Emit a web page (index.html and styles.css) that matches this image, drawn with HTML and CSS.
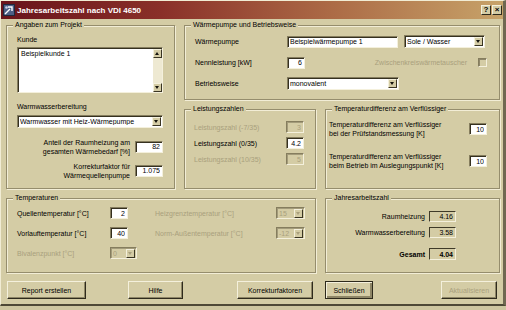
FILE: index.html
```html
<!DOCTYPE html>
<html lang="de">
<head>
    <meta charset="UTF-8">
    <title>Jahresarbeitszahl nach VDI 4650</title>
    <link rel="stylesheet" href="styles.css">
</head>
<body>

    <div class="window">
        <!-- Titelleiste -->
        <div class="titlebar">
            <svg class="app-icon" viewBox="0 0 12 12">
                <rect x="0.5" y="0.5" width="11" height="11" fill="#4d5f86" stroke="#20283c"/>
                <path d="M2 10 L7 5 M5 3 L9 3 L9 7" stroke="#ffffff" stroke-width="1.4" fill="none"/>
                <circle cx="3.5" cy="3.5" r="1.3" fill="#c9d3e6"/>
            </svg>
            <span class="title">Jahresarbeitszahl nach VDI 4650</span>
            <span class="cap-btn">?</span>
            <span class="cap-btn">×</span>
        </div>

        <div class="client">
            <div class="layout">

                <!-- Angaben zum Projekt -->
                <div class="group g-projekt">
                    <span class="group-title">Angaben zum Projekt</span>
                    <div class="label">Kunde</div>
                    <div class="memo">
                        <span class="memo-text">Beispielkunde 1</span>
                        <div class="scrollbar">
                            <span class="arrow up"></span>
                            <span class="arrow down"></span>
                        </div>
                    </div>
                    <div class="label ww-label">Warmwasserbereitung</div>
                    <div class="combo ww-combo">
                        <span class="combo-text">Warmwasser mit Heiz-Wärmepumpe</span>
                        <span class="drop"></span>
                    </div>
                    <div class="pair-row">
                        <span class="pair-label">Anteil der Raumheizung am<br>gesamten Wärmebedarf [%]</span>
                        <input class="field w28" type="text" value="82">
                    </div>
                    <div class="pair-row second">
                        <span class="pair-label">Korrekturfaktor für<br>Wärmequellenpumpe</span>
                        <input class="field w28" type="text" value="1.075">
                    </div>
                </div>

                <!-- Wärmepumpe und Betriebsweise -->
                <div class="group g-pumpe">
                    <span class="group-title">Wärmepumpe und Betriebsweise</span>
                    <div class="row">
                        <span class="row-label">Wärmepumpe</span>
                        <input class="field name-field" type="text" value="Beispielwärmepumpe 1">
                        <div class="combo medium-combo">
                            <span class="combo-text">Sole / Wasser</span>
                            <span class="drop"></span>
                        </div>
                    </div>
                    <div class="row">
                        <span class="row-label">Nennleistung [kW]</span>
                        <input class="field w18" type="text" value="6">
                        <span class="disabled-text spacer-left">Zwischenkreiswärmetauscher</span>
                        <span class="checkbox"></span>
                    </div>
                    <div class="row">
                        <span class="row-label">Betriebsweise</span>
                        <div class="combo long-combo">
                            <span class="combo-text">monovalent</span>
                            <span class="drop"></span>
                        </div>
                    </div>
                </div>

                <!-- Leistungszahlen -->
                <div class="group g-cop">
                    <span class="group-title">Leistungszahlen</span>
                    <div class="cop-row">
                        <span class="row-label disabled-text">Leistungszahl (-7/35)</span>
                        <input class="field w18" type="text" value="3" disabled>
                    </div>
                    <div class="cop-row">
                        <span class="row-label">Leistungszahl (0/35)</span>
                        <input class="field w18" type="text" value="4.2">
                    </div>
                    <div class="cop-row">
                        <span class="row-label disabled-text">Leistungszahl (10/35)</span>
                        <input class="field w18" type="text" value="5" disabled>
                    </div>
                </div>

                <!-- Temperaturdifferenz am Verflüssiger -->
                <div class="group g-diff">
                    <span class="group-title">Temperaturdifferenz am Verflüssiger</span>
                    <div class="diff-row">
                        <span class="pair-label left">Temperaturdifferenz am Verflüssiger<br>bei der Prüfstandsmessung [K]</span>
                        <input class="field w18" type="text" value="10">
                    </div>
                    <div class="diff-row">
                        <span class="pair-label left">Temperaturdifferenz am Verflüssiger<br>beim Betrieb im Auslegungspunkt [K]</span>
                        <input class="field w18" type="text" value="10">
                    </div>
                </div>

                <!-- Temperaturen -->
                <div class="group g-temp">
                    <span class="group-title">Temperaturen</span>
                    <div class="temp-grid">
                        <span>Quellentemperatur [°C]</span>
                        <input class="field w18" type="text" value="2">
                        <span class="disabled-text">Heizgrenztemperatur [°C]</span>
                        <div class="combo disabled"><span class="combo-text">15</span><span class="drop"></span></div>

                        <span>Vorlauftemperatur [°C]</span>
                        <input class="field w18" type="text" value="40">
                        <span class="disabled-text">Norm-Außentemperatur [°C]</span>
                        <div class="combo disabled"><span class="combo-text">-12</span><span class="drop"></span></div>

                        <span class="disabled-text">Bivalenzpunkt [°C]</span>
                        <div class="combo disabled small-combo"><span class="combo-text">0</span><span class="drop"></span></div>
                    </div>
                </div>

                <!-- Jahresarbeitszahl -->
                <div class="group g-jaz">
                    <span class="group-title">Jahresarbeitszahl</span>
                    <div class="jaz-row">
                        <span>Raumheizung</span>
                        <span class="static">4.16</span>
                    </div>
                    <div class="jaz-row">
                        <span>Warmwasserbereitung</span>
                        <span class="static">3.58</span>
                    </div>
                    <div class="jaz-row total">
                        <span>Gesamt</span>
                        <span class="static">4.04</span>
                    </div>
                </div>

            </div>

            <!-- Schaltflächen -->
            <div class="buttons">
                <button class="btn b-report">Report erstellen</button>
                <button class="btn b-hilfe">Hilfe</button>
                <button class="btn b-korr">Korrekturfaktoren</button>
                <button class="btn b-close">Schließen</button>
                <button class="btn b-update" disabled>Aktualisieren</button>
            </div>
        </div>
    </div>

</body>
</html>
```

FILE: styles.css
```css
body {
    margin: 0;
    background: #cec6a0;
    font-family: 'Liberation Sans', Arial, sans-serif;
    font-size: 7px;
    color: #000000;
}

.window {
    width: 506px;
    height: 306px;
    box-sizing: border-box;
    background: #d4cca5;
    border-top: 1px solid #f1ecd4;
    border-left: 1px solid #f1ecd4;
    border-right: 3px solid #706851;
    border-bottom: 2px solid #4e4836;
}

/* Titelleiste */
.titlebar {
    height: 18px;
    display: flex;
    align-items: center;
    padding: 0 1px 0 2px;
    background: linear-gradient(to right, #69141b 0%, #8a3029 32%, #ac6b46 66%, #c7a369 100%);
}

.app-icon {
    width: 12px;
    height: 12px;
    margin-right: 2px;
}

.title {
    flex: 1;
    color: white;
    font-weight: bold;
    font-size: 8px;
}

.cap-btn {
    width: 10px;
    height: 10px;
    box-sizing: border-box;
    margin-left: 1px;
    background: #d4cca5;
    border: 1px solid;
    border-color: #f4f0dc #2e2a1c #2e2a1c #f4f0dc;
    font-size: 8px;
    font-weight: bold;
    line-height: 8px;
    text-align: center;
}

/* Fensterinhalt */
.client {
    padding: 6px 0 0 5px;
}

.layout {
    display: grid;
    grid-template-columns: 169px 132px 175px;
    grid-template-rows: 75px 80px 75px;
    gap: 9px;
}

.group {
    position: relative;
    box-sizing: border-box;
    border: 1px solid #958d6d;
    box-shadow: 1px 1px 0 #f2edd6, inset 1px 1px 0 #f2edd6;
}

.group-title {
    position: absolute;
    top: -6px;
    left: 6px;
    padding: 0 2px;
    background: #d4cca5;
    line-height: 9px;
}

.label {
    line-height: 10px;
}

.disabled-text {
    color: #a9a07d;
}

/* Eingabefelder */
.field {
    box-sizing: border-box;
    height: 12px;
    margin: 0;
    padding: 0 2px;
    border: 1px solid;
    border-color: #857d5e #f4f0dc #f4f0dc #857d5e;
    box-shadow: inset 1px 1px 0 #35301f;
    background: white;
    font: inherit;
    color: inherit;
    text-align: right;
    outline: none;
}

.field:disabled {
    background: #d4cca5;
    color: #a9a07d;
    box-shadow: inset 1px 1px 0 #a39b7a;
}

.w18 { width: 18px; }
.w28 { width: 28px; }

.combo {
    box-sizing: border-box;
    height: 13px;
    display: flex;
    align-items: center;
    padding-left: 2px;
    border: 1px solid;
    border-color: #857d5e #f4f0dc #f4f0dc #857d5e;
    box-shadow: inset 1px 1px 0 #35301f;
    background: white;
}

.combo-text {
    flex: 1;
    white-space: nowrap;
    overflow: hidden;
}

.drop {
    position: relative;
    width: 9px;
    height: 9px;
    margin: 0 1px 0 0;
    box-sizing: border-box;
    background: #d4cca5;
    border: 1px solid;
    border-color: #f4f0dc #3a3523 #3a3523 #f4f0dc;
}

.drop::after {
    content: "";
    position: absolute;
    left: 1px;
    top: 2px;
    border-left: 2.5px solid transparent;
    border-right: 2.5px solid transparent;
    border-top: 3px solid #15130c;
}

.combo.disabled {
    background: #d4cca5;
    color: #a9a07d;
    box-shadow: inset 1px 1px 0 #a39b7a;
    height: 12px;
}

.combo.disabled .drop::after {
    border-top-color: #a9a07d;
}

.checkbox {
    width: 9px;
    height: 9px;
    box-sizing: border-box;
    border: 1px solid;
    border-color: #857d5e #f4f0dc #f4f0dc #857d5e;
    box-shadow: inset 1px 1px 0 #8f876a;
    margin-left: 11px;
}

/* Angaben zum Projekt */
.g-projekt {
    grid-row: 1 / 3;
    padding: 9px 11px 0 10px;
}

.memo {
    display: flex;
    height: 46px;
    margin-top: 2px;
    box-sizing: border-box;
    border: 1px solid;
    border-color: #857d5e #f4f0dc #f4f0dc #857d5e;
    box-shadow: inset 1px 1px 0 #35301f;
    background: white;
}

.memo-text {
    flex: 1;
    padding: 2px 0 0 3px;
}

.scrollbar {
    width: 9px;
    margin: 1px 0 0;
    display: flex;
    flex-direction: column;
    justify-content: space-between;
    background: #eee9d2;
}

.arrow {
    position: relative;
    height: 9px;
    box-sizing: border-box;
    background: #d4cca5;
    border: 1px solid;
    border-color: #f4f0dc #3a3523 #3a3523 #f4f0dc;
}

.arrow::after {
    content: "";
    position: absolute;
    left: 1px;
    top: 2px;
    border-left: 2.5px solid transparent;
    border-right: 2.5px solid transparent;
}

.arrow.up::after { border-bottom: 3px solid #15130c; }
.arrow.down::after { border-top: 3px solid #15130c; }

.ww-label {
    margin-top: 9px;
}

.ww-combo {
    margin-top: 3px;
}

.pair-row {
    display: flex;
    justify-content: flex-end;
    align-items: center;
    gap: 5px;
    height: 19px;
    margin-top: 9px;
}

.pair-row.second {
    margin-top: 5px;
}

.pair-label {
    text-align: right;
    line-height: 9px;
}

.pair-label.left {
    text-align: left;
}

/* Wärmepumpe und Betriebsweise */
.g-pumpe {
    grid-column: 2 / 4;
    padding: 9px 12px 0 10px;
    display: flex;
    flex-direction: column;
    gap: 8px;
}

.row {
    display: flex;
    align-items: center;
    height: 13px;
}

.row-label {
    width: 92px;
    flex-shrink: 0;
}

.name-field {
    width: 111px;
    height: 12px;
    text-align: left;
}

.medium-combo {
    width: 81px;
    margin-left: 6px;
}

.long-combo {
    width: 112px;
}

.spacer-left {
    margin-left: auto;
}

/* Leistungszahlen */
.g-cop {
    padding: 11px 0 0 9px;
    display: flex;
    flex-direction: column;
    gap: 4px;
}

.cop-row {
    display: flex;
    align-items: center;
    height: 12px;
}

/* Temperaturdifferenz */
.g-diff {
    padding: 9px 12px 0 3px;
    display: flex;
    flex-direction: column;
    gap: 12px;
}

.diff-row {
    display: flex;
    justify-content: space-between;
    align-items: center;
    height: 20px;
}

/* Temperaturen */
.g-temp {
    grid-column: 1 / 3;
    padding: 8px 0 0 10px;
}

.temp-grid {
    display: grid;
    grid-template-columns: 93px 45px 121px 29px;
    grid-auto-rows: 12px;
    row-gap: 8px;
    align-items: center;
}

.small-combo {
    width: 27px;
}

/* Jahresarbeitszahl */
.g-jaz {
    padding: 12px 43px 0 0;
    display: flex;
    flex-direction: column;
    gap: 5px;
}

.jaz-row {
    display: flex;
    justify-content: flex-end;
    align-items: center;
    gap: 4px;
    height: 11px;
}

.jaz-row.total {
    margin-top: 5px;
    height: 12px;
    font-weight: bold;
}

.static {
    box-sizing: border-box;
    width: 27px;
    height: 100%;
    padding-right: 2px;
    display: flex;
    align-items: center;
    justify-content: flex-end;
    border: 1px solid;
    border-color: #3f3a28 #f4f0dc #f4f0dc #3f3a28;
}

/* Schaltflächen */
.buttons {
    display: flex;
    margin-top: 8px;
}

.btn {
    height: 18px;
    box-sizing: border-box;
    margin: 0;
    padding: 0;
    background: #d4cca5;
    border: 1px solid;
    border-color: #f4f0dc #2e2a1c #2e2a1c #f4f0dc;
    box-shadow: inset -1px -1px 0 #8e8666;
    font: inherit;
    color: inherit;
}

.btn:disabled {
    color: #a9a07d;
}

.b-report { width: 79px; margin-left: 1px; }
.b-hilfe { width: 55px; margin-left: 42px; }
.b-korr { width: 76px; margin-left: 54px; }
.b-close {
    width: 48px;
    margin-left: 12px;
    border-color: #2e2a1c;
    box-shadow: inset 1px 1px 0 #f4f0dc, inset -2px -2px 0 #8e8666;
}
.b-update { width: 56px; margin-left: 68px; }
```
